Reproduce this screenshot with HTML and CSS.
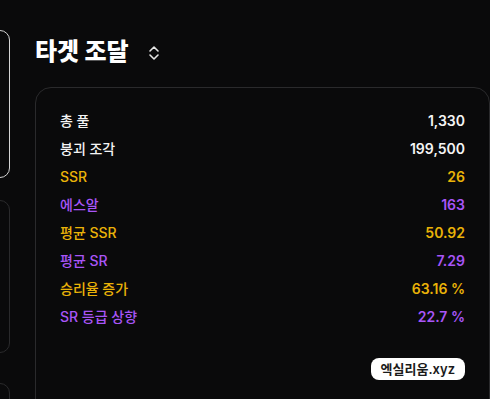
FILE: index.html
```html
<!DOCTYPE html>
<html lang="ko">
  <head>
    <meta charset="UTF-8" />
    <meta name="viewport" content="width=device-width, initial-scale=1.0" />
    <title>타겟 조달</title>
    <link rel="stylesheet" href="styles.css">
  </head>
  <body>
    <div class="layout">
      <aside class="sidebar">
        <div class="side-card active"></div>
        <div class="side-card tall"></div>
        <div class="side-card last"></div>
      </aside>

      <main class="main">
        <div class="title-row">
          <h1>타겟 조달</h1>
          <svg class="chevron" width="12" height="16" viewBox="0 0 12 16" fill="none" stroke="#e5e5e5" stroke-width="1.6" stroke-linecap="round" stroke-linejoin="round">
            <path d="M2 6 L6 2 L10 6" />
            <path d="M2 10 L6 14 L10 10" />
          </svg>
        </div>

        <div class="card">
          <div class="stat"><span>총 풀</span><span class="num">1,330</span></div>
          <div class="stat"><span>붕괴 조각</span><span class="num">199,500</span></div>
          <div class="stat ssr"><span>SSR</span><span class="num">26</span></div>
          <div class="stat sr"><span>에스알</span><span class="num">163</span></div>
          <div class="stat ssr"><span>평균 SSR</span><span class="num">50.92</span></div>
          <div class="stat sr"><span>평균 SR</span><span class="num">7.29</span></div>
          <div class="stat ssr"><span>승리율 증가</span><span class="num">63.16 %</span></div>
          <div class="stat sr"><span>SR 등급 상향</span><span class="num">22.7 %</span></div>

          <div class="card-footer">
            <span class="badge">엑실리움.xyz</span>
          </div>
        </div>
      </main>
    </div>
  </body>
</html>
```

FILE: styles.css
```css
body {
  font-family: Inter, "Noto Sans CJK KR", sans-serif;
  background-color: #0a0a0b;
  color: #f5f5f5;
  margin: 0;
  overflow: hidden;
}

.layout {
  display: flex;
  gap: 25px;
  height: 399px;
  overflow: hidden;
}

.sidebar {
  width: 200px;
  margin-left: -190px;
  padding-top: 30px;
  display: flex;
  flex-direction: column;
  gap: 22px;
  flex-shrink: 0;
}

.side-card {
  flex-shrink: 0;
  height: 146px;
  border: 1px solid #2a2a2c;
  border-radius: 10px;
}

.side-card.active {
  border-color: #d4d4d4;
}

.side-card.tall {
  height: 151px;
}

.side-card.last {
  margin-top: 8px;
  height: 150px;
}

.main {
  flex: 1;
  padding-top: 35px;
}

.title-row {
  display: flex;
  align-items: center;
  gap: 19px;
  height: 34px;
  margin-bottom: 18px;
}

h1 {
  margin: 0;
  font-size: 24px;
  font-weight: 800;
  color: #ffffff;
  line-height: 34px;
}

.chevron {
  margin-top: 2px;
}

.card {
  flex-shrink: 0;
  border: 1px solid #2a2a2c;
  border-radius: 16px;
  padding: 18px 24px 0 24px;
  height: 340px;
}

.stat {
  display: flex;
  justify-content: space-between;
  align-items: center;
  height: 28px;
  font-size: 14px;
  font-weight: 500;
  color: #f5f5f5;
}

.stat .num {
  font-weight: 600;
}

.ssr {
  color: #eab308;
}

.sr {
  color: #a855f7;
}

.card-footer {
  display: flex;
  justify-content: flex-end;
  margin-top: 28px;
}

.badge {
  background-color: #ffffff;
  color: #1a1a1a;
  font-size: 13px;
  font-weight: 600;
  padding: 2px 10px;
  border-radius: 8px;
  line-height: 18px;
}
```
